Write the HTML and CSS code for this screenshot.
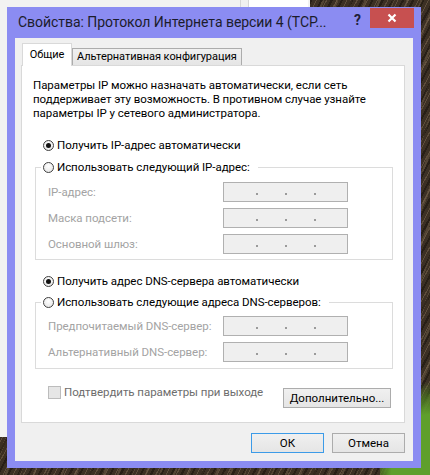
FILE: index.html
```html
<!DOCTYPE html>
<html lang="ru">
<head>
<meta charset="utf-8">
<title>Свойства: Протокол Интернета версии 4</title>
<link rel="stylesheet" href="styles.css">
</head>
<body>
<div class="desktop">
  <div class="bg-window"><div class="bg-strip"></div></div>
  <div class="grass"></div>
  <div class="dialog">
    <div class="titlebar">
      <div class="title">Свойства: Протокол Интернета версии 4 (TCP...</div>
      <div class="help">?</div>
      <div class="close">
        <svg width="10" height="10" viewBox="0 0 10 10"><path d="M1.5 1.5 L8.5 8.5 M8.5 1.5 L1.5 8.5" stroke="#fff" stroke-width="2.2" fill="none"/></svg>
      </div>
    </div>
    <div class="client">
      <div class="tabs">
        <div class="tab active">Общие</div>
        <div class="tab">Альтернативная конфигурация</div>
      </div>
      <div class="panel">
        <p class="desc">Параметры IP можно назначать автоматически, если сеть<br>поддерживает эту возможность. В противном случае узнайте<br>параметры IP у сетевого администратора.</p>

        <div class="radio-row ip-auto"><span class="radio on"></span><span>Получить IP-адрес автоматически</span></div>
        <fieldset class="group ip-group">
          <legend><span class="radio"></span><span>Использовать следующий IP-адрес:</span></legend>
          <div class="field"><span class="lbl">IP-адрес:</span><span class="ipbox"><i></i><i></i><i></i></span></div>
          <div class="field"><span class="lbl">Маска подсети:</span><span class="ipbox"><i></i><i></i><i></i></span></div>
          <div class="field"><span class="lbl">Основной шлюз:</span><span class="ipbox"><i></i><i></i><i></i></span></div>
        </fieldset>

        <div class="radio-row dns-auto"><span class="radio on"></span><span>Получить адрес DNS-сервера автоматически</span></div>
        <fieldset class="group dns-group">
          <legend><span class="radio"></span><span>Использовать следующие адреса DNS-серверов:</span></legend>
          <div class="field"><span class="lbl">Предпочитаемый DNS-сервер:</span><span class="ipbox"><i></i><i></i><i></i></span></div>
          <div class="field"><span class="lbl">Альтернативный DNS-сервер:</span><span class="ipbox"><i></i><i></i><i></i></span></div>
        </fieldset>

        <div class="confirm-row">
          <span class="check"></span>
          <span class="confirm-lbl">Подтвердить параметры при выходе</span>
          <button class="btn adv">Дополнительно...</button>
        </div>
      </div>
      <div class="actions">
        <button class="btn ok">ОК</button>
        <button class="btn">Отмена</button>
      </div>
    </div>
  </div>
</div>
</body>
</html>
```

FILE: styles.css
```css
* { box-sizing: border-box; }
html, body { margin: 0; padding: 0; }
body {
  width: 430px;
  height: 475px;
  overflow: hidden;
  font-family: Roboto, "Noto Sans", sans-serif;
  font-size: 11.5px;
  letter-spacing: -0.05px;
  color: #000;
}

.desktop {
  position: relative;
  width: 430px;
  height: 475px;
  overflow: hidden;
  background-color: #3c3024;
  background-image:
    repeating-linear-gradient(118deg, rgba(120,100,78,0.55) 0 1px, transparent 1px 4px, rgba(20,14,8,0.5) 4px 6px, transparent 6px 9px),
    repeating-linear-gradient(112deg, rgba(150,128,100,0.25) 0 2px, transparent 2px 13px);
}

.bg-window {
  position: absolute;
  left: 0;
  top: 0;
  width: 310px;
  height: 437px;
  background: #f2f2f2;
}
.bg-strip {
  position: absolute;
  left: 240px;
  top: 0;
  width: 68px;
  height: 7px;
  background: linear-gradient(to right, #d6d6d6 0 1px, #f0f0f0 1px 8px, #d6d6d6 8px 9px, #ffffff 9px);
}

.grass {
  position: absolute;
  left: 380px;
  top: 380px;
  width: 50px;
  height: 95px;
  background:
    radial-gradient(ellipse 70px 110px at 100% 100%, #5f9f2c 0 55%, rgba(80,130,35,0.7) 70%, transparent 85%);
}

.dialog {
  position: absolute;
  left: 7px;
  top: 7px;
  width: 414px;
  height: 461px;
  background: #8b8cf2;
  padding: 0 8px 7px 8px;
  display: flex;
  flex-direction: column;
}

.titlebar {
  height: 31px;
  display: flex;
  align-items: flex-start;
}
.title {
  flex: 1;
  min-width: 0;
  padding: 5px 0 0 3px;
  font-size: 14px;
  letter-spacing: -0.05px;
  line-height: 20px;
  color: #1c1c2c;
  white-space: nowrap;
}
.help {
  margin: 4px 9px 0 0;
  font-size: 14px;
  line-height: 18px;
  font-weight: bold;
  color: #1e1e3a;
}
.close {
  width: 44px;
  height: 20px;
  margin: 1px -1px 0 0;
  background: #c75050;
  display: flex;
  align-items: center;
  justify-content: center;
}
.close svg { display: block; }

.client {
  flex: 1;
  background: #f0f0f0;
  padding: 5px 8px 8px 6px;
  display: flex;
  flex-direction: column;
}

.tabs {
  display: flex;
  align-items: flex-end;
  height: 23px;
  margin: 0 0 -1px 1px;
  position: relative;
  z-index: 1;
}
.tab {
  height: 17px;
  margin-bottom: 1px;
  padding: 0 4px;
  font-size: 11px;
  line-height: 16px;
  border: 1px solid #acacac;
  border-bottom: none;
  background: linear-gradient(#f0f0f0, #e5e5e5);
  white-space: nowrap;
}
.tab.active {
  height: 23px;
  margin-bottom: 0;
  width: 50px;
  padding: 3px 0 0 0;
  font-size: 11px;
  text-align: center;
  background: #fff;
  border-color: #d9d9d9;
}

.panel {
  flex: 1;
  background: #fff;
  border: 1px solid #d9d9d9;
  padding: 12px 11px 0 11px;
}

.desc {
  margin: 0;
  line-height: 14px;
  white-space: nowrap;
}

.radio-row {
  display: flex;
  align-items: center;
  height: 18px;
  padding-left: 10px;
  gap: 3px;
  white-space: nowrap;
}
.ip-auto { margin-top: 16px; }
.dns-auto { margin-top: 12px; }

.radio {
  flex: none;
  width: 11px;
  height: 11px;
  border-radius: 50%;
  border: 1px solid #404040;
  background: radial-gradient(circle at 50% 35%, #ffffff, #e2e2e2);
  position: relative;
}
.radio.on::after {
  content: "";
  position: absolute;
  left: 2px;
  top: 2px;
  width: 5px;
  height: 5px;
  border-radius: 50%;
  background: #111;
}

.group {
  margin: 4px 0 0 2px;
  border: 1px solid #dcdcdc;
  padding: 6px 0 5px 0;
  min-width: 0;
}
.dns-group { margin-top: 3px; padding-bottom: 6px; padding-top: 5px; }
.group legend {
  display: flex;
  align-items: center;
  gap: 3px;
  height: 18px;
  margin-left: 5px;
  padding: 0 8px 0 2px;
  white-space: nowrap;
}

.field {
  display: grid;
  grid-template-columns: 175px 125px;
  align-items: center;
  height: 20px;
  padding-left: 12px;
}
.field + .field { margin-top: 6px; }
.lbl { color: #a3a3a3; white-space: nowrap; }

.ipbox {
  height: 20px;
  border: 1px solid #b0b0b0;
  background: #efefef;
  display: flex;
  align-items: flex-end;
  padding: 0 0 6px 32px;
  gap: 27px;
}
.ipbox i {
  display: block;
  width: 2px;
  height: 2px;
  background: #9a9a9a;
}

.confirm-row {
  display: flex;
  align-items: flex-start;
  margin-top: 17px;
  padding-left: 15px;
}
.check {
  flex: none;
  width: 13px;
  height: 13px;
  border: 1px solid #bcbcbc;
  background: #e6e6e6;
}
.confirm-lbl {
  margin-left: 3px;
  line-height: 13px;
  color: #6d6d6d;
  white-space: nowrap;
}

.btn {
  font-family: Roboto, "Noto Sans", sans-serif;
  font-size: 11.5px;
  color: #000;
  height: 20px;
  padding: 0;
  line-height: 18px;
  border: 1px solid #acacac;
  background: linear-gradient(#f0f0f0, #e5e5e5);
  border-radius: 0;
}
.adv {
  margin: 2px 2px 0 auto;
  width: 108px;
}

.actions {
  display: flex;
  justify-content: flex-end;
  gap: 8px;
  margin-top: 10px;
}
.actions .btn { width: 73px; }
.ok { border-color: #3c9be8; }
```
